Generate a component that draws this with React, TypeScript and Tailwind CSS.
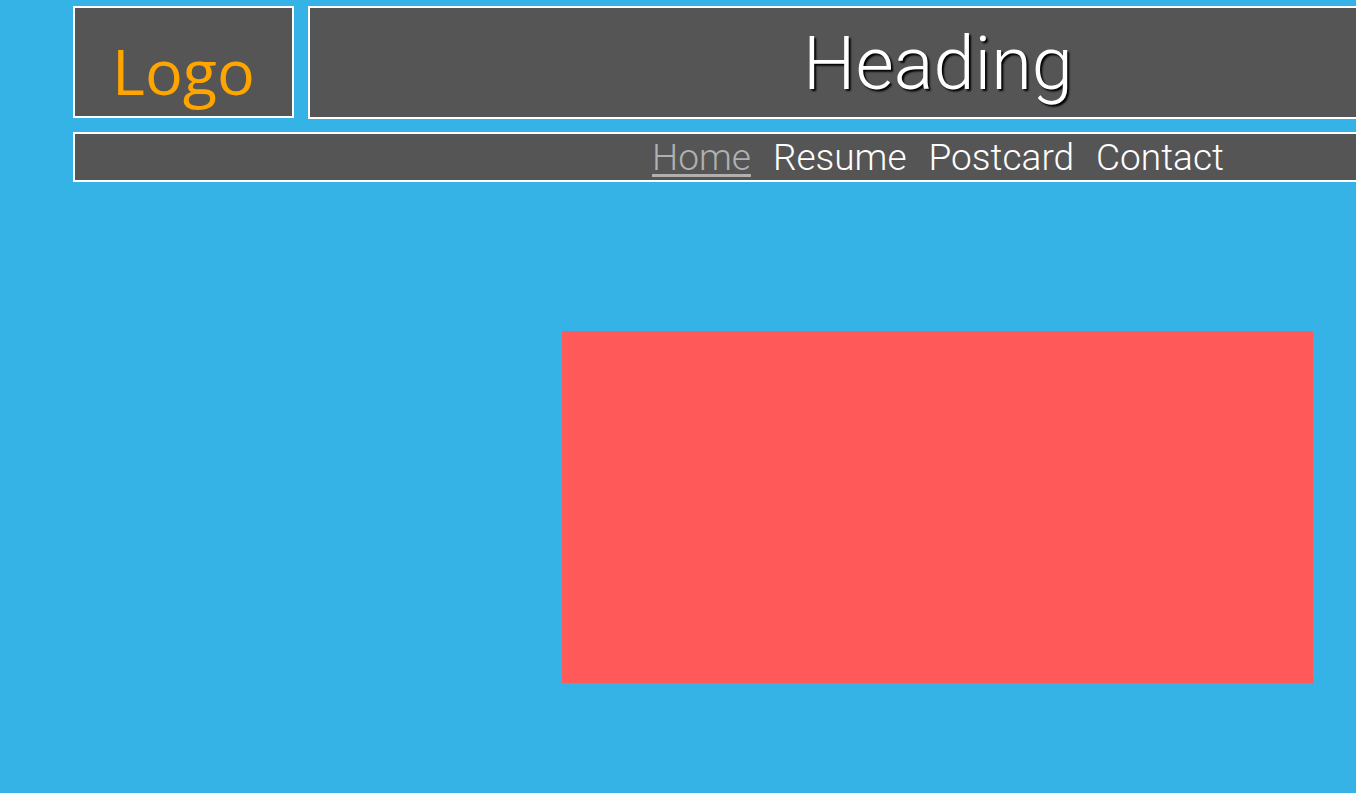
const navLinks = ['Home', 'Resume', 'Postcard', 'Contact'];

export default function App() {
  return (
    <div className="min-h-[793px] bg-[#36b3e6] overflow-hidden font-['Roboto',sans-serif]">
      <div className="flex gap-[14px] pt-[6px] pl-[73px] w-max">
        <div className="w-[221px] h-[112px] border-2 border-white bg-[#555555] flex items-center justify-center">
          <span className="font-['Open_Sans',sans-serif] text-[63px] leading-none text-[#ffa500] mt-[16px]">Logo</span>
        </div>
        <div className="w-[1260px] h-[113px] border-2 border-white bg-[#555555] flex items-center justify-center">
          <h1 className="text-[74px] font-light leading-none text-white mt-[2px] [text-shadow:2px_2px_2px_#000]">Heading</h1>
        </div>
      </div>
      <nav className="mt-[13px] ml-[73px] w-[1494px] h-[50px] border-2 border-white bg-[#555555] flex items-center gap-[22px] pl-[577px]">
        {navLinks.map((l, i) => (
          <a
            key={l}
            href="#"
            className={
              i === 0
                ? 'text-[37px] font-light leading-none text-[#b0b0b0] underline decoration-[3px] underline-offset-[4px]'
                : 'text-[37px] font-light leading-none text-white'
            }
          >
            {l}
          </a>
        ))}
      </nav>
      <div className="mt-[149px] ml-[562px] w-[751px] h-[352px] bg-[#ff5959]" />
    </div>
  );
}
